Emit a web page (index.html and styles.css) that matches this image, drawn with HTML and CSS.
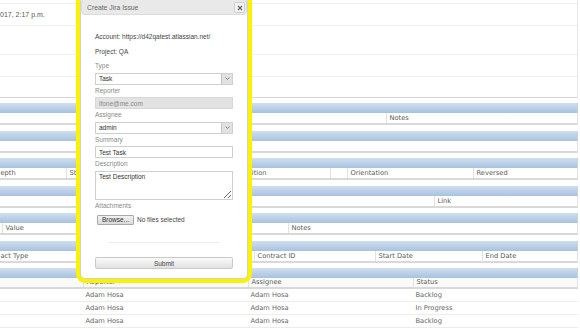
FILE: index.html
```html
<!DOCTYPE html>
<html lang="en">
<head>
    <meta charset="UTF-8">
    <meta name="viewport" content="width=device-width, initial-scale=1.0">
    <title>Create Jira Issue</title>
    <link rel="stylesheet" href="styles.css">
</head>
<body>
    <div class="page">
        <div class="panel">
            <div class="panel-row row-a"></div>
            <div class="panel-row row-b"><span class="date">017, 2:17 p.m.</span></div>
            <div class="panel-row row-c"></div>
            <div class="panel-row row-d"></div>
            <div class="panel-row row-e"></div>
        </div>

        <div class="section">
            <div class="sec-bar"></div>
            <div class="sec-row cols-notes">
                <div class="cell"></div>
                <div class="cell">Notes</div>
            </div>
        </div>

        <div class="section">
            <div class="sec-bar"></div>
            <div class="sec-row cols-one">
                <div class="cell"></div>
            </div>
        </div>

        <div class="section">
            <div class="sec-bar"></div>
            <div class="sec-row cols-units">
                <div class="cell"></div>
                <div class="cell depth">epth</div>
                <div class="cell">Start</div>
                <div class="cell">Position</div>
                <div class="cell"></div>
                <div class="cell">Orientation</div>
                <div class="cell">Reversed</div>
            </div>
        </div>

        <div class="section">
            <div class="sec-bar"></div>
            <div class="sec-row cols-link">
                <div class="cell"></div>
                <div class="cell">Link</div>
            </div>
        </div>

        <div class="section">
            <div class="sec-bar"></div>
            <div class="sec-row cols-values">
                <div class="cell"></div>
                <div class="cell">Value</div>
                <div class="cell">Notes</div>
            </div>
        </div>

        <div class="section">
            <div class="sec-bar"></div>
            <div class="sec-row cols-contracts">
                <div class="cell"></div>
                <div class="cell contract-type">act Type</div>
                <div class="cell">Contract ID</div>
                <div class="cell">Start Date</div>
                <div class="cell">End Date</div>
            </div>
        </div>

        <div class="section last">
            <div class="sec-bar"></div>
            <div class="sec-row head cols-issues">
                <div class="cell"></div>
                <div class="cell">Reporter</div>
                <div class="cell">Assignee</div>
                <div class="cell">Status</div>
            </div>
            <div class="data-row cols-issues">
                <div class="cell"></div>
                <div class="cell">Adam Hosa</div>
                <div class="cell">Adam Hosa</div>
                <div class="cell">Backlog</div>
            </div>
            <div class="data-row cols-issues">
                <div class="cell"></div>
                <div class="cell">Adam Hosa</div>
                <div class="cell">Adam Hosa</div>
                <div class="cell">In Progress</div>
            </div>
            <div class="data-row cols-issues">
                <div class="cell"></div>
                <div class="cell">Adam Hosa</div>
                <div class="cell">Adam Hosa</div>
                <div class="cell">Backlog</div>
            </div>
        </div>
    </div>

    <div class="dialog">
        <div class="titlebar">
            <span class="title">Create Jira Issue</span>
            <button class="close" type="button">
                <svg width="6" height="6" viewBox="0 0 6 6"><path d="M1 1L5 5M5 1L1 5" stroke="#6a6a6a" stroke-width="1.4" fill="none"/></svg>
            </button>
        </div>
        <div class="dialog-body">
            <p class="info">Account: https://d42qatest.atlassian.net/</p>
            <p class="info">Project: QA</p>

            <label class="field-label">Type</label>
            <div class="control select">
                <span>Task</span>
                <span class="arrow"><svg width="5" height="3" viewBox="0 0 5 3"><path d="M0.5 0.5L2.5 2.5L4.5 0.5" stroke="#777" stroke-width="0.9" fill="none"/></svg></span>
            </div>

            <label class="field-label">Reporter</label>
            <div class="control disabled">ifone@me.com</div>

            <label class="field-label">Assignee</label>
            <div class="control select">
                <span>admin</span>
                <span class="arrow"><svg width="5" height="3" viewBox="0 0 5 3"><path d="M0.5 0.5L2.5 2.5L4.5 0.5" stroke="#777" stroke-width="0.9" fill="none"/></svg></span>
            </div>

            <label class="field-label">Summary</label>
            <input class="control text" type="text" value="Test Task">

            <label class="field-label">Description</label>
            <textarea class="control area">Test Description</textarea>

            <label class="field-label">Attachments</label>
            <div class="file-row">
                <button class="browse" type="button">Browse...</button>
                <span class="file-name">No files selected</span>
            </div>

            <hr class="separator">

            <button class="submit" type="button">Submit</button>
        </div>
    </div>
</body>
</html>
```

FILE: styles.css
```css
html, body {
    margin: 0;
    padding: 0;
    overflow: hidden;
}

body {
    background: #fff;
    color: #5a5a5a;
    font-family: "DejaVu Sans", Verdana, sans-serif;
    font-size: 6.7px;
}

.page {
    width: 618px;
    margin: -10px 0 0 -40px;
}

/* top details panel */
.panel {
    border: 1px solid #e6e6e6;
    border-bottom-color: #d8d8d8;
    margin-bottom: 5px;
}

.panel-row {
    display: flex;
    align-items: center;
    border-bottom: 1px solid #efefef;
}

.panel-row:last-child { border-bottom: 0; }

.row-a { height: 12px; }
.row-b { height: 21px; }
.row-c { height: 28px; }
.row-d { height: 21px; }
.row-e { height: 20px; }

.date {
    padding-left: 39px;
    font-family: "Liberation Sans", Arial, sans-serif;
    font-size: 7px;
    color: #555;
}

/* blue section blocks */
.section {
    margin-bottom: 5.5px;
}

.sec-bar {
    height: 10px;
    background: linear-gradient(#d0dff0, #a7c2df);
    border-right: 1px solid #c3d3e4;
}

.sec-row {
    display: grid;
    height: 10px;
    border: 1px solid #e2e2e2;
    border-top: 0;
    border-bottom: 2px solid #d9d9d9;
    background: #fff;
}

.sec-row.head {
    height: 9px;
    background: #fafafa;
}

.cell {
    border-left: 1px solid #e2e2e2;
    padding-left: 2.5px;
    line-height: 10px;
    white-space: nowrap;
    overflow: hidden;
}

.cell.depth { padding-left: 6.5px; }
.cell.contract-type { padding-left: 20.5px; }

.sec-row.head .cell { line-height: 9px; }

.data-row {
    display: grid;
    height: 12px;
    border-bottom: 1px solid #ececec;
    color: #666;
}

.data-row .cell {
    border-left: 0;
    padding-left: 3.5px;
    line-height: 13px;
}

.cols-notes { grid-template-columns: 425px 1fr; }
.cols-one { grid-template-columns: 1fr; }
.cols-units { grid-template-columns: 32px 73px 171px 93px 17px 126px 1fr; }
.cols-link { grid-template-columns: 473px 1fr; }
.cols-values { grid-template-columns: 41px 286px 1fr; }
.cols-contracts { grid-template-columns: 18px 275px 121px 107px 1fr; }
.cols-issues { grid-template-columns: 122px 165px 165px 1fr; }

/* modal dialog */
.dialog {
    position: absolute;
    left: 80px;
    top: -3px;
    width: 168px;
    height: 282px;
    box-sizing: border-box;
    background: #fff;
    border: 1px solid #d2d2d2;
    border-radius: 5px;
    box-shadow: 0 0 0 4px #fbf200;
    font-family: "Liberation Sans", Arial, sans-serif;
    font-size: 6.5px;
    color: #444;
}

.titlebar {
    display: flex;
    align-items: center;
    justify-content: space-between;
    height: 17px;
    box-sizing: border-box;
    padding: 2px 1px 0 5px;
    background: #e9e9e9;
    border: 1px solid #dcdcdc;
    border-radius: 4px;
    color: #666;
    font-size: 6.8px;
}

.close {
    display: flex;
    align-items: center;
    justify-content: center;
    width: 11px;
    height: 11px;
    padding: 0;
    background: #f4f4f4;
    border: 1px solid #d0d0d0;
    border-radius: 2px;
}

.dialog-body {
    padding: 17px 14px 0;
}

.info {
    margin: 0 0 6px;
    line-height: 9px;
}

.info + .field-label { margin-top: -1px; }

.field-label {
    display: block;
    margin-top: 1px;
    line-height: 9px;
    color: #8a8a8a;
}

.control {
    display: flex;
    align-items: center;
    width: 100%;
    height: 12px;
    box-sizing: border-box;
    margin: 2.5px 0 0;
    padding: 0 0 0 3px;
    background: #fff;
    border: 1px solid #cfcfcf;
    font-family: inherit;
    font-size: 6.5px;
    color: #333;
    outline: none;
}

.select {
    justify-content: space-between;
    padding-right: 0;
}

.arrow {
    display: flex;
    align-items: center;
    justify-content: center;
    width: 10px;
    height: 100%;
    background: #e2e2e2;
    border-left: 1px solid #c6c6c6;
}

.disabled {
    background: #e3e3e3;
    border-color: #d8d8d8;
    color: #888;
}

.area {
    display: block;
    height: 29px;
    padding: 1px 3px;
    resize: vertical;
    line-height: 8px;
}

.file-row {
    display: flex;
    align-items: center;
    gap: 3px;
    margin: 5px 0 0 2px;
}

.browse {
    width: 37px;
    height: 10px;
    padding: 0;
    background: linear-gradient(#f2f2f2, #dadada);
    border: 1px solid #a9a9a9;
    border-radius: 1px;
    font-family: inherit;
    font-size: 6.5px;
    color: #333;
}

.file-name { color: #444; }

.separator {
    margin: 17.5px 13px 0;
    border: 0;
    border-top: 1px solid #ececec;
}

.submit {
    display: block;
    width: 100%;
    height: 12px;
    margin-top: 14px;
    padding: 0;
    background: linear-gradient(#fbfbfb, #e2e2e2);
    border: 1px solid #cacaca;
    border-radius: 2px;
    font-family: inherit;
    font-size: 6.5px;
    color: #444;
}
```
